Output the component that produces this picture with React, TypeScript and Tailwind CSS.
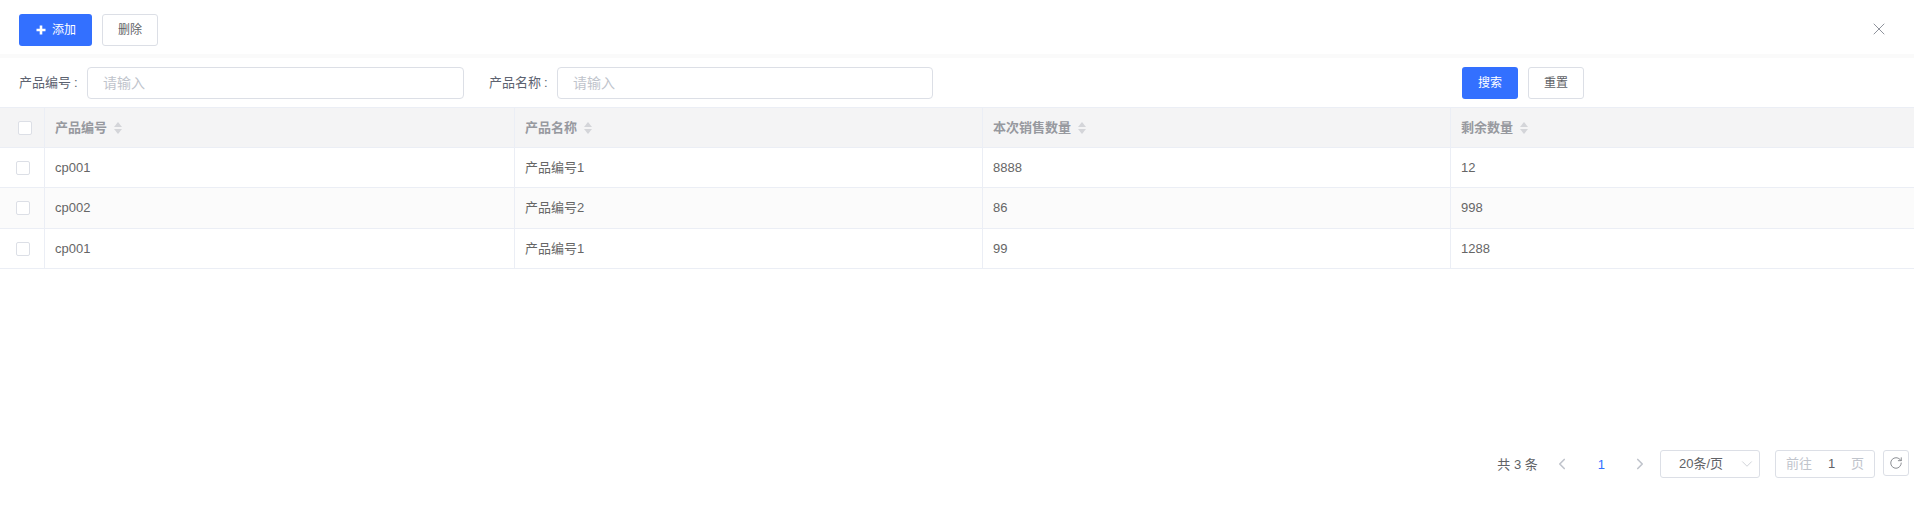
import { ChevronDown, ChevronLeft, ChevronRight, RotateCw, X } from 'lucide-react';

const font = { fontFamily: '"Liberation Sans", "Noto Sans CJK SC", sans-serif' };

const columns = [
    { title: '产品编号', w: 'w-[470px]' },
    { title: '产品名称', w: 'w-[468px]' },
    { title: '本次销售数量', w: 'w-[468px]' },
    { title: '剩余数量', w: 'flex-1' },
];

const rows = [
    ['cp001', '产品编号1', '8888', '12'],
    ['cp002', '产品编号2', '86', '998'],
    ['cp001', '产品编号1', '99', '1288'],
];

function SortIcon() {
    return (
        <svg width="8" height="12" viewBox="0 0 8 12" className="ml-[7px] mt-[1px]">
            <path d="M4 0 L8 5 L0 5 Z" fill="#d4d5d9" />
            <path d="M4 12 L8 7 L0 7 Z" fill="#d4d5d9" />
        </svg>
    );
}

function Checkbox() {
    return <div className="w-[14px] h-[14px] bg-white border border-[#dcdfe6] rounded-[2px]"></div>;
}

function Field({ label, width }: { label: string; width: string }) {
    return (
        <div className="flex items-center">
            <span className="w-[68px] text-[13px] text-[#5c6270]">{label}<span className="ml-[3px]">:</span></span>
            <div className={`${width} h-[32px] border border-[#dcdfe6] rounded-[4px] pl-[15px] flex items-center text-[14px] text-[#c0c4cc]`}>请输入</div>
        </div>
    );
}

export default function App() {
    return (
        <div className="w-[1914px] h-[507px] bg-white overflow-hidden flex flex-col" style={font}>
            {/* Toolbar */}
            <div className="h-[54px] flex items-start justify-between pt-[14px] pl-[19px] pr-[25px]">
                <div className="flex gap-[10px]">
                    <button className="w-[73px] h-[32px] bg-[#3370ff] rounded-[3px] text-white text-[12px] flex items-center pl-[17px] gap-[6px]">
                        <svg width="10" height="10" viewBox="0 0 10 10">
                            <path d="M5 0.5 V9.5 M0.5 5 H9.5" stroke="#fff" strokeWidth="2.6" />
                        </svg>
                        添加
                    </button>
                    <button className="w-[56px] h-[32px] border border-[#dcdfe6] rounded-[3px] text-[#606266] text-[12px]">删除</button>
                </div>
                <X size={20} strokeWidth={1.2} className="text-[#8f939c] mt-[5px]" />
            </div>
            <div className="h-[4px] bg-[#fafafa]"></div>

            {/* Search */}
            <div className="h-[49px] flex items-start pt-[9px] pl-[19px]">
                <Field label="产品编号" width="w-[377px]" />
                <div className="ml-[25px]">
                    <Field label="产品名称" width="w-[376px]" />
                </div>
                <button className="ml-[529px] w-[56px] h-[32px] bg-[#3370ff] rounded-[3px] text-white text-[12px]">搜索</button>
                <button className="ml-[10px] w-[56px] h-[32px] border border-[#dcdfe6] rounded-[3px] text-[#606266] text-[12px]">重置</button>
            </div>

            {/* Table */}
            <div className="flex h-[41px] bg-[#f4f4f5] border-y border-[#ebeef5]">
                <div className="w-[45px] pl-[6px] border-r border-[#ebeef5] flex items-center justify-center">
                    <Checkbox />
                </div>
                {columns.map((c, i) => (
                    <div key={i} className={`${c.w} flex items-center pl-[10px] text-[13px] font-bold text-[#97999f] ${i < 3 ? 'border-r border-[#ebeef5]' : ''}`}>
                        {c.title}
                        <SortIcon />
                    </div>
                ))}
            </div>
            {rows.map((r, i) => (
                <div key={i} className={`flex border-b border-[#ebeef5] ${i === 1 ? 'h-[41px] bg-[#fbfbfb]' : 'h-[40px] bg-white'}`}>
                    <div className="w-[45px] pl-[2px] border-r border-[#ebeef5] flex items-center justify-center">
                        <Checkbox />
                    </div>
                    {r.map((v, j) => (
                        <div key={j} className={`${columns[j].w} flex items-center pl-[10px] text-[13px] text-[#666666] ${j < 3 ? 'border-r border-[#ebeef5]' : ''}`}>
                            {v}
                        </div>
                    ))}
                </div>
            ))}

            {/* Pagination */}
            <div className="flex-1 flex justify-end items-start pt-[181px] pr-[5px] text-[13px] text-[#606266]">
                <span className="mt-[5px] mr-[15px]">共 3 条</span>
                <ChevronLeft size={18} strokeWidth={2.2} className="text-[#c0c4cc] mt-[5px]" />
                <span className="mt-[5px] ml-[27px] mr-[26px] text-[#3370ff]">1</span>
                <ChevronRight size={18} strokeWidth={2.2} className="text-[#c0c4cc] mt-[5px]" />
                <div className="ml-[11px] w-[100px] h-[28px] border border-[#dcdfe6] rounded-[3px] flex items-center justify-between pl-[18px] pr-[3px]">
                    20条/页
                    <ChevronDown size={18} strokeWidth={1} className="text-[#c0c4cc]" />
                </div>
                <div className="ml-[15px] w-[100px] h-[28px] border border-[#dcdfe6] rounded-[3px] flex items-center justify-between px-[10px] text-[#c0c4cc]">
                    前往
                    <span className="text-[#606266]">1</span>
                    页
                </div>
                <div className="ml-[8px] w-[26px] h-[26px] border border-[#dcdfe6] rounded-[3px] flex items-center justify-center">
                    <RotateCw size={14} strokeWidth={1.5} className="text-[#7c7f85]" />
                </div>
            </div>
        </div>
    );
}
